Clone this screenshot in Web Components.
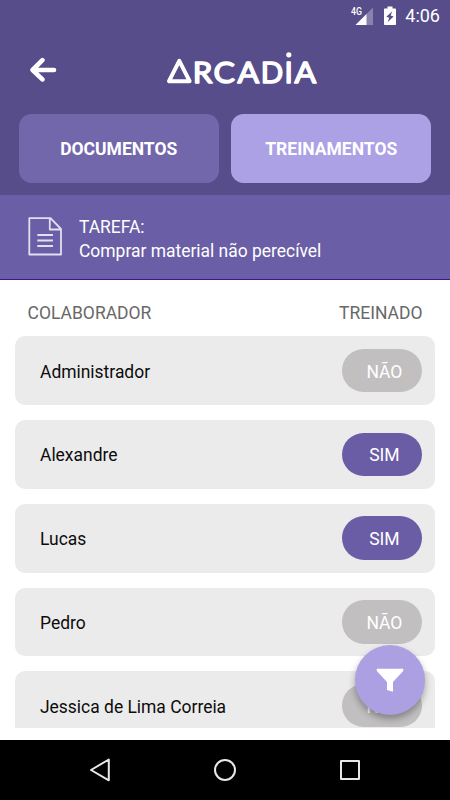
<!DOCTYPE html>
<html lang="pt-BR">
<head>
<meta charset="utf-8">
<title>Arcadia</title>
<style>
   html, body { margin: 0; height: 100%; overflow: hidden; }
   body { font-family: Roboto, "Liberation Sans", sans-serif; background: #fff; }
</style>
</head>
<body>
<arcadia-app></arcadia-app>

<script>
const define = (name, html, setup) => {
   const tmpl = document.createElement("template");
   tmpl.innerHTML = html;
   customElements.define(name, class extends HTMLElement {
      constructor() {
         super();
         this.attachShadow({ mode: "open" });
         this.shadowRoot.appendChild(tmpl.content.cloneNode(true));
         if (setup) setup(this);
      }
   });
};

define("status-bar", `
   <style>
      :host {
         display: flex;
         box-sizing: border-box;
         height: 32px;
         padding-right: 10px;
         justify-content: flex-end;
         align-items: center;
         color: #fff;
         font-size: 18px;
         line-height: 32px;
      }
      svg { display: block; }
      .signal { width: 23px; height: 20px; }
      .battery { width: 12px; height: 20px; margin: 0 9px 0 11px; }
   </style>
   <svg class="signal" viewBox="0 0 23 20" fill="#fff">
      <path d="M23.5 1V19H5.5Z" opacity=".3"/>
      <path d="M16.5 8V19H5.5Z"/>
      <text x="1" y="8.8" font-size="10.5" font-weight="500" textLength="11" lengthAdjust="spacingAndGlyphs">4G</text>
   </svg>
   <svg class="battery" viewBox="0 0 12 20">
      <path fill="#fff" d="M3.5.5h5v2h2.7q.8 0 .8.8v15q0 .8-.8.8H.8q-.8 0-.8-.8v-15q0-.8.8-.8h2.7Z"/>
      <path fill="#574d8a" d="M8.3 5.2 2.3 10.7l3 1-1.7 4.5 6-5.6-3-1Z"/>
   </svg>
   <span><slot></slot></span>
`);

define("brand-logo", `
   <style>
      :host { display: block; width: 160px; height: 48px; }
      svg { display: block; }
      text { font: 400 29.5px Lato, sans-serif; stroke: #fff; stroke-width: 1.5; stroke-linejoin: round; }
   </style>
   <svg width="160" height="48" viewBox="165 44 160 48" fill="#fff" role="img" aria-label="Arcadia">
      <path d="M179.3 60.8 169 81.2H189.6Z" fill="none" stroke="#fff" stroke-width="4" stroke-linejoin="round"/>
      <g transform="translate(192.8)"><text y="82.5" textLength="19.6" lengthAdjust="spacingAndGlyphs">R</text></g>
      <g transform="translate(213.6)"><text y="82.5" textLength="21.4" lengthAdjust="spacingAndGlyphs">C</text></g>
      <g transform="translate(237.4)"><text y="82.5" textLength="21.6" lengthAdjust="spacingAndGlyphs">A</text></g>
      <g transform="translate(260.7)"><text y="82.5" textLength="22.4" lengthAdjust="spacingAndGlyphs">D</text></g>
      <g transform="translate(284.6)"><text y="82.5">I</text></g>
      <g transform="translate(294.4)"><text y="82.5" textLength="21.6" lengthAdjust="spacingAndGlyphs">A</text></g>
      <circle cx="288.8" cy="54.8" r="2.6"/>
   </svg>
`);

define("title-bar", `
   <style>
      :host {
         display: grid;
         grid-template-columns: 165px 160px;
         align-items: center;
         height: 72px;
      }
      .back { display: block; margin: 4px 0 0 29px; }
   </style>
   <svg class="back" width="28" height="26" viewBox="0 0 28 26" fill="none" stroke="#fff" stroke-width="4.6" stroke-linecap="round" stroke-linejoin="round">
      <path d="M13.4 3.2 3.6 13 13.4 22.4M4 13H25"/>
   </svg>
   <brand-logo></brand-logo>
`);

define("tab-button", `
   <style>
      :host {
         display: flex;
         box-sizing: border-box;
         align-items: center;
         justify-content: center;
         height: 68.5px;
         padding-top: 2px;
         border-radius: 12.5px;
         background: #7367ac;
         color: #fff;
         font-size: 17.5px;
         font-weight: 700;
      }
      :host([active]) { background: #aca1e4; }
   </style>
   <span><slot></slot></span>
`);

define("task-banner", `
   <style>
      :host {
         display: flex;
         box-sizing: border-box;
         height: 85px;
         padding-left: 27px;
         align-items: center;
         background: #6a5ea6;
         border-bottom: 1px solid #3c188c;
         color: #fff;
         font-size: 17.45px;
         line-height: 24px;
      }
      svg { display: block; margin-right: 16px; }
      div { padding-top: 3px; }
   </style>
   <svg width="36" height="40" viewBox="0 0 36 40" fill="none" stroke="#e1dff0" stroke-width="1.8" stroke-linejoin="round">
      <path d="M2.3 1.2H23.5L34 12V37.5H2.3ZM22.8 1.2V12.5H34M10.3 18H26M10.3 23.5H26M10.3 29H26"/>
   </svg>
   <div><slot name="label"></slot><br><slot></slot></div>
`);

define("trained-pill", `
   <style>
      :host {
         display: flex;
         box-sizing: border-box;
         width: 80px;
         height: 43.5px;
         padding: 2px 0 0 4px;
         align-items: center;
         justify-content: center;
         border-radius: 22px;
         background: #c2bfc1;
         color: #fff;
         font-size: 17.5px;
      }
      :host([yes]) { background: #6a5da6; }
   </style>
   <span><slot></slot></span>
`);

define("person-row", `
   <style>
      :host {
         display: flex;
         box-sizing: border-box;
         height: 68.75px;
         padding: 0 12.6px 0 25px;
         flex-shrink: 0;
         align-items: center;
         justify-content: space-between;
         border-radius: 10px;
         background: #ebebeb;
         color: #0c0c0c;
         font-size: 17.45px;
      }
      span { padding-top: 2px; }
   </style>
   <span><slot></slot></span>
   <trained-pill></trained-pill>
`, host => {
   const pill = host.shadowRoot.querySelector("trained-pill");
   const trained = host.hasAttribute("trained");
   pill.toggleAttribute("yes", trained);
   pill.textContent = trained ? "SIM" : "NÃO";
});

define("filter-button", `
   <style>
      :host {
         display: grid;
         place-items: center;
         width: 70px;
         height: 70px;
         border-radius: 50%;
         background: #aca0e3;
         box-shadow: 0 4px 7px rgba(0, 0, 0, .32);
      }
   </style>
   <svg width="28" height="24" viewBox="0 0 28 24" fill="#fff">
      <path d="M.8.8H27.2V3L17 14V23.8L11 22V14L.8 3Z"/>
   </svg>
`);

define("nav-bar", `
   <style>
      :host {
         display: grid;
         grid-template-columns: repeat(3, 125px);
         height: 60px;
         place-items: center;
         place-content: center;
         background: #000;
      }
      svg { display: block; }
   </style>
   <svg width="24" height="24" fill="none" stroke="#e8e8e8" stroke-width="2" stroke-linejoin="round"><path d="M20.8 1.5V22.3L3 12Z"/></svg>
   <svg width="24" height="24" fill="none" stroke="#e8e8e8" stroke-width="2"><circle cx="12" cy="12" r="10"/></svg>
   <svg width="24" height="24" fill="none" stroke="#e8e8e8" stroke-width="2" stroke-linejoin="round"><path d="M3 3H21V21H3Z"/></svg>
`);

define("arcadia-app", `
   <style>
      :host {
         display: flex;
         flex-direction: column;
         position: relative;
         width: 450px;
         height: 800px;
         overflow: hidden;
      }
      header { height: 195px; background: #574d8a; }
      .tabs {
         display: grid;
         grid-template-columns: 1fr 1fr;
         gap: 12.5px;
         padding: 10px 18.75px 0;
      }
      main { flex: 1; min-height: 0; }
      .headings {
         display: flex;
         justify-content: space-between;
         padding: 21px 27.5px 0;
         height: 35.25px;
         color: #686868;
         font-size: 17.5px;
         line-height: 24px;
      }
      .list {
         display: flex;
         flex-direction: column;
         gap: 15px;
         height: 391.25px;
         margin: 0 15px;
         overflow: hidden;
      }
      filter-button { position: absolute; left: 355px; top: 645px; }
   </style>
   <header>
      <status-bar>4:06</status-bar>
      <title-bar></title-bar>
      <div class="tabs">
         <tab-button>DOCUMENTOS</tab-button>
         <tab-button active>TREINAMENTOS</tab-button>
      </div>
   </header>
   <task-banner><span slot="label">TAREFA:</span>Comprar material não perecível</task-banner>
   <main>
      <div class="headings"><span>COLABORADOR</span><span>TREINADO</span></div>
      <div class="list">
         <person-row>Administrador</person-row>
         <person-row trained>Alexandre</person-row>
         <person-row trained>Lucas</person-row>
         <person-row>Pedro</person-row>
         <person-row>Jessica de Lima Correia</person-row>
      </div>
   </main>
   <nav-bar></nav-bar>
   <filter-button></filter-button>
`);
</script>
</body>
</html>
